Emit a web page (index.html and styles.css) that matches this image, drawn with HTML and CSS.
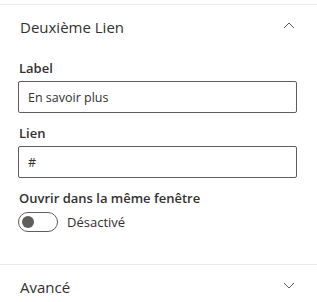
FILE: index.html
```html
<!DOCTYPE html>
<html lang="fr">

<head>
    <meta charset="UTF-8">
    <meta name="viewport" content="width=device-width, initial-scale=1.0">
    <title>Deuxième Lien</title>
    <link rel="stylesheet" href="styles.css">
</head>

<body>
    <div class="panel">
        <div class="group">
            <div class="group-header">
                <span class="group-title">Deuxième Lien</span>
                <svg class="chevron" width="12" height="8" viewBox="0 0 12 8">
                    <path d="M1 6 L6 1 L11 6" fill="none" stroke="#605e5c" stroke-width="1"/>
                </svg>
            </div>
            <div class="group-content">
                <label class="field-label" for="label">Label</label>
                <div class="field">
                    <input type="text" id="label" class="text-input" value="En savoir plus">
                </div>

                <label class="field-label" for="link">Lien</label>
                <div class="field">
                    <input type="text" id="link" class="text-input" value="#">
                </div>

                <label class="field-label toggle-label">Ouvrir dans la même fenêtre</label>
                <div class="toggle-row">
                    <span class="toggle"><span class="toggle-thumb"></span></span>
                    <span class="toggle-text">Désactivé</span>
                </div>
            </div>
        </div>

        <div class="group">
            <div class="group-header">
                <span class="group-title">Avancé</span>
                <svg class="chevron" width="12" height="8" viewBox="0 0 12 8">
                    <path d="M1 1 L6 6 L11 1" fill="none" stroke="#605e5c" stroke-width="1"/>
                </svg>
            </div>
        </div>
    </div>
</body>

</html>
```

FILE: styles.css
```css
body {
    margin: 0;
    background-color: #fff;
    font-family: "Open Sans", "Noto Sans", sans-serif;
    color: #323130;
}

.panel {
    padding-top: 4px;
}

.group {
    border-top: 1px solid #edebe9;
}

.group-header {
    display: flex;
    align-items: center;
    justify-content: space-between;
    height: 44px;
    padding: 0 22px 0 20px;
}

.group-title {
    font-size: 15px;
    line-height: 20px;
}

.chevron {
    display: block;
    margin-bottom: 3px;
}

.group-content {
    padding: 0 20px 32px 18px;
}

.field-label {
    display: block;
    font-size: 13px;
    font-weight: 600;
    line-height: 20px;
    padding: 9px 1px 3px;
}

.field {
    margin-bottom: 1px;
}

.text-input {
    display: block;
    width: 100%;
    box-sizing: border-box;
    height: 32px;
    padding: 0 9px;
    border: 1px solid #605e5c;
    border-radius: 2px;
    font-family: inherit;
    font-size: 12.5px;
    color: #323130;
    outline: none;
}

.toggle-label {
    padding-bottom: 4px;
}

.toggle-row {
    display: flex;
    align-items: center;
    gap: 9px;
}

.toggle {
    display: flex;
    align-items: center;
    box-sizing: border-box;
    width: 40px;
    height: 20px;
    padding: 0 3px;
    border: 1px solid #605e5c;
    border-radius: 10px;
}

.toggle-thumb {
    width: 12px;
    height: 12px;
    border-radius: 50%;
    background-color: #605e5c;
}

.toggle-text {
    font-size: 13px;
    line-height: 20px;
}
```
